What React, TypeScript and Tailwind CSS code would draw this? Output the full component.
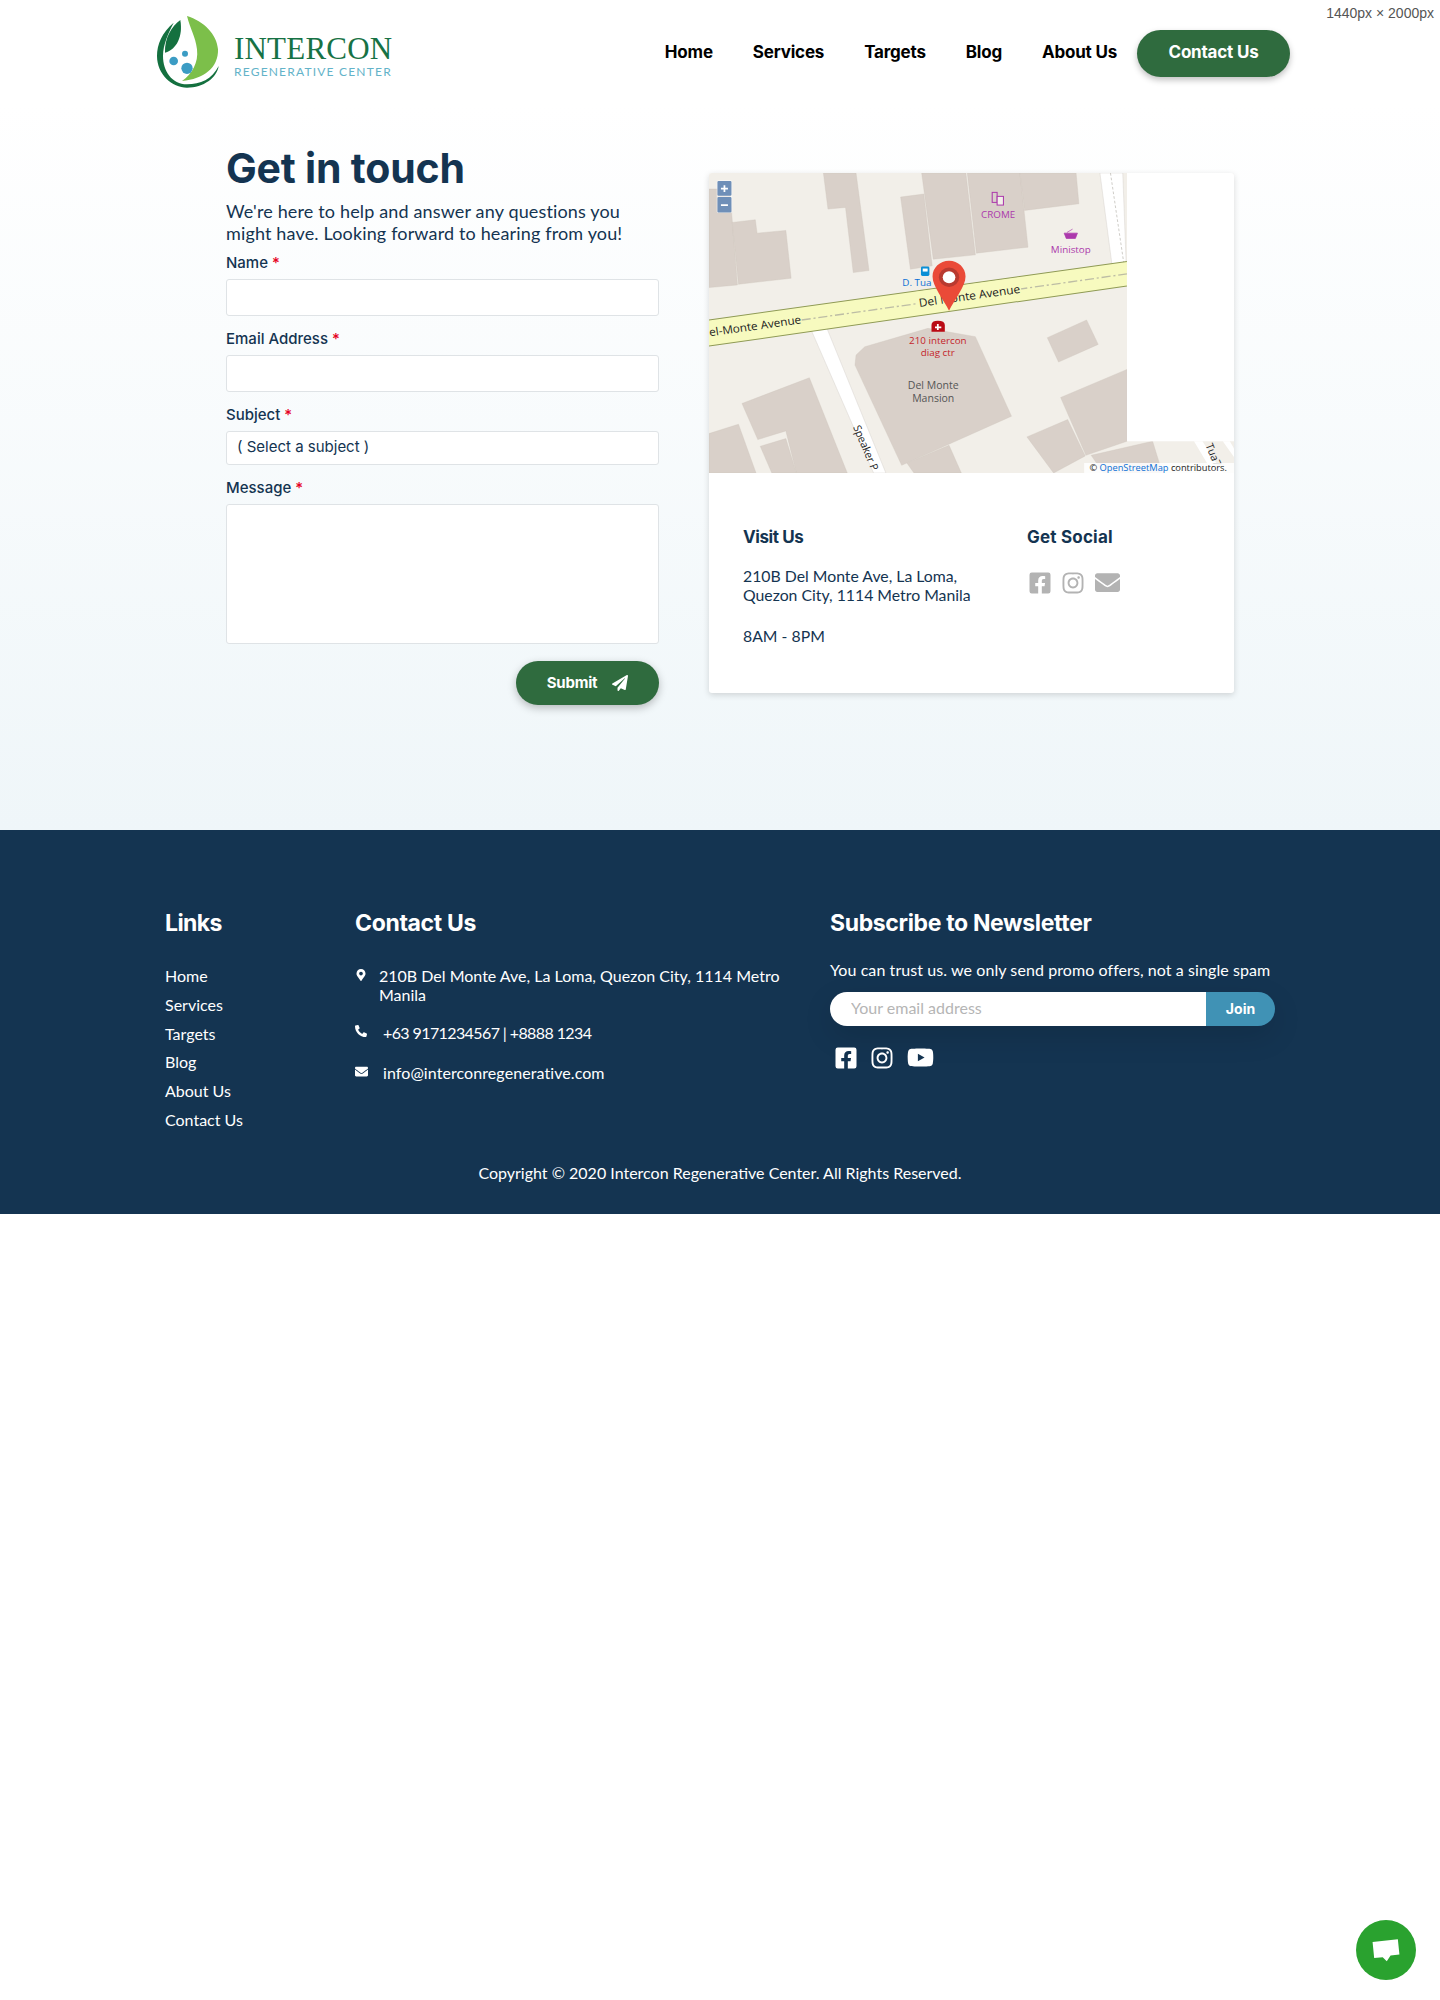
import { FaEnvelope, FaFacebookSquare, FaInstagram, FaMapMarkerAlt, FaPaperPlane, FaPhoneAlt, FaYoutube } from "react-icons/fa"

const navLinks = ["Home", "Services", "Targets", "Blog", "About Us"]
const footerLinks = ["Home", "Services", "Targets", "Blog", "About Us", "Contact Us"]

function Logo() {
  return (
    <div className="flex items-center w-[235px] h-[71px]">
      <svg viewBox="50 50 186 216" className="w-[62px] h-[72px] shrink-0">
        <path d="M100 70 C65 100 50 135 50 170 C50 225 95 265 140 265 C190 265 230 235 235 200 C215 240 180 255 140 255 C95 255 68 215 68 170 C68 135 85 100 100 70Z" fill="#14703f" />
        <path d="M120 62 C95 80 72 115 74 160 C110 150 128 110 120 62Z" fill="#14703f" />
        <path d="M140 50 C150 90 165 110 170 150 C175 190 155 225 125 245 C190 240 235 205 233 150 C230 105 190 65 140 50Z" fill="#7cbf4a" />
        <circle cx="134" cy="163" r="9" fill="#3b9cc4" />
        <circle cx="100" cy="185" r="13" fill="#3b9cc4" />
        <circle cx="140" cy="207" r="17" fill="#3b9cc4" />
      </svg>
      <div className="ml-[15px] pt-[8px]">
        <div className="font-['Liberation_Serif',serif] text-[31px] leading-[30px] text-[#177245] tracking-[0.2px]">INTERCON</div>
        <div className="font-['Lato',sans-serif] text-[12px] leading-[14px] text-[#63b3c9] tracking-[1.2px] whitespace-nowrap mt-[1px]">REGENERATIVE CENTER</div>
      </div>
    </div>
  )
}

function MapView() {
  const buildings = [
    "352,40 445,40 482,332 437,338 415,143 365,148",
    "26,88 85,88 107,375 26,383",
    "92,188 158,180 163,220 245,212 260,355 110,373",
    "572,112 638,103 662,318 600,328",
    "632,40 758,40 785,285 665,298",
    "762,40 912,40 935,262 788,280",
    "912,40 1072,40 1080,132 925,152",
    "445,585 470,560 650,505 785,530 888,768 575,915 442,615",
    "590,908 710,855 745,938 610,938",
    "990,533 1102,480 1135,553 1022,606",
    "1028,712 1217,628 1217,843 1100,885",
    "932,830 1048,778 1098,887 1008,938",
    "1115,885 1290,843 1318,938 1150,938",
    "120,730 312,653 420,938 275,938 245,812 165,838",
    "26,820 110,792 160,938 26,938",
    "172,858 245,835 275,938 205,938",
  ]
  return (
    <svg viewBox="26 40 1496 898" preserveAspectRatio="none" className="block w-full h-[300px]">
      <rect x="26" y="40" width="1496" height="898" fill="#f2efe9" />
      {buildings.map((b) => (
        <polygon key={b} points={b} fill="#d9d0c9" stroke="#cdc4bc" strokeWidth="1" />
      ))}
      <polygon points="1140,40 1205,40 1215,320 1175,320" fill="#fff" stroke="#c9c5bd" strokeWidth="1" />
      <line x1="1170" y1="40" x2="1208" y2="310" stroke="#b9b5ae" strokeWidth="2" strokeDasharray="8 6" />
      <polygon points="318,512 362,505 530,938 495,938" fill="#fff" stroke="#c9c5bd" />
      <polygon points="1408,843 1432,843 1490,938 1462,938" fill="#fff" />
      <polygon points="1490,843 1510,843 1522,865 1522,890" fill="#fff" />
      <polygon points="26,480 1217,305 1217,378 26,558" fill="#f7fabf" />
      <line x1="26" y1="480" x2="1217" y2="305" stroke="#8f9a55" strokeWidth="3" />
      <line x1="26" y1="558" x2="1217" y2="378" stroke="#8f9a55" strokeWidth="3" />
      <line x1="290" y1="480" x2="1217" y2="342" stroke="#bdbda5" strokeWidth="4" strokeDasharray="26 8 6 8" />
      <g fontFamily="'Open Sans',sans-serif">
        <rect x="620" y="396" width="300" height="50" fill="#f7fabf" transform="rotate(-8.4 620 441)" />
        <text x="28" y="529" fontSize="33.5" fill="#222" transform="rotate(-8.4 28 529)">el-Monte Avenue</text>
        <text x="626" y="441" fontSize="34" fill="#222" transform="rotate(-8.4 626 441)">Del Monte Avenue</text>
        <text x="850" y="175" fontSize="28" fill="#ac39ac" textAnchor="middle">CROME</text>
        <text x="1057" y="279" fontSize="28" fill="#ac39ac" textAnchor="middle">Ministop</text>
        <text x="577" y="379" fontSize="28" fill="#0a6fd6">D. Tua</text>
        <text x="678" y="553" fontSize="28" fill="#c4252b" textAnchor="middle">210 intercon</text>
        <text x="678" y="588" fontSize="28" fill="#c4252b" textAnchor="middle">diag ctr</text>
        <text x="665" y="687" fontSize="30" fill="#555" textAnchor="middle">Del Monte</text>
        <text x="665" y="725" fontSize="30" fill="#555" textAnchor="middle">Mansion</text>
        <text x="436" y="800" fontSize="31" fill="#222" transform="rotate(68 436 800)">Speaker P</text>
        <text x="1440" y="855" fontSize="31" fill="#222" transform="rotate(68 1440 855)">Tua7</text>
      </g>
      <rect x="833" y="98" width="14" height="30" fill="none" stroke="#ac39ac" strokeWidth="3" />
      <rect x="847" y="110" width="18" height="26" fill="#f2efe9" stroke="#ac39ac" strokeWidth="3" />
      <path d="M1038 220 H1076 L1070 236 H1044Z M1046 218 L1062 208" fill="#ac39ac" stroke="#ac39ac" strokeWidth="2" />
      <rect x="630" y="320" width="24" height="28" rx="4" fill="#0a8fd6" />
      <rect x="635" y="326" width="14" height="9" fill="#fff" />
      <path d="M660 515 V495 Q660 482 678 482 Q698 482 698 495 V515Z" fill="#ba0a14" />
      <path d="M678 492 V510 M670 502 H688" stroke="#fff" strokeWidth="5" />
      <path d="M710 303 C736 303 757 324 757 350 C757 380 725 420 710 452 C695 420 663 380 663 350 C663 324 684 303 710 303Z" fill="#ea4a38" />
      <circle cx="710" cy="352" r="29" fill="#b93a30" />
      <circle cx="710" cy="352" r="18" fill="#fff" />
      <rect x="48" y="62" width="44" height="98" rx="5" fill="#fff" fillOpacity="0.6" />
      <rect x="50" y="64" width="40" height="44" rx="3" fill="#6f8fb8" />
      <rect x="50" y="112" width="40" height="46" rx="3" fill="#6f8fb8" />
      <path d="M60 87 H80 M70 77 V97 M60 136 H80" stroke="#fff" strokeWidth="5" />
      <rect x="1217" y="40" width="305" height="803" fill="#fff" />
      <rect x="1095" y="908" width="427" height="30" fill="#fff" fillOpacity="0.85" />
      <text x="1110" y="933" fontSize="26.5" fontFamily="'Open Sans',sans-serif" fill="#222">
        © <tspan fill="#0a6fd6">OpenStreetMap</tspan> contributors.
      </text>
    </svg>
  )
}

function Field({ label, className, children }: { label: string; className?: string; children: React.ReactNode }) {
  return (
    <div className={className}>
      <label className="block font-['Inter',sans-serif] text-[15px] leading-[20px] font-medium text-[#143451]">
        {label} <span className="text-[#e60023]">*</span>
      </label>
      {children}
    </div>
  )
}

const inputClass = "block w-full bg-white border border-[#dfe3e6] rounded-[3px] outline-none"

export default function App() {
  return (
    <div className="relative font-['Lato',sans-serif] bg-white min-h-[2000px]">
      <div className="absolute top-[5px] right-[6px] font-['Liberation_Sans',sans-serif] text-[14px] leading-[17px] text-[#555]">1440px × 2000px</div>

      <header className="w-[1140px] h-[104px] mx-auto flex items-center justify-between pl-[7px]">
        <Logo />
        <nav className="flex items-center mt-[2px] font-['Inter',sans-serif] text-[17px] font-bold text-black tracking-[-0.2px]">
          {navLinks.map((n) => (
            <a key={n} className="ml-[40px] first:ml-0">{n}</a>
          ))}
          <a className="ml-[20px] w-[153px] h-[47px] flex items-center justify-center rounded-full bg-[#2f6b3e] text-white shadow-[0_3px_6px_rgba(0,0,0,0.25)]">Contact Us</a>
        </nav>
      </header>

      <section className="h-[726px] bg-gradient-to-b from-white to-[#eff6f9]">
        <div className="w-[1140px] mx-auto pl-[76px] pt-[39px] flex items-start gap-[50px] text-[#143451]">
          <form className="w-[433px] shrink-0">
            <h1 className="font-['Inter',sans-serif] text-[41px] leading-[50px] font-bold tracking-[-0.2px]">Get in touch</h1>
            <p className="text-[18px] leading-[22px] mt-[7px] tracking-[0.15px]">We're here to help and answer any questions you might have. Looking forward to hearing from you!</p>
            <Field label="Name" className="mt-[9px]">
              <input className={`${inputClass} h-[37px] mt-[6px]`} />
            </Field>
            <Field label="Email Address" className="mt-[13px]">
              <input className={`${inputClass} h-[37px] mt-[6px]`} />
            </Field>
            <Field label="Subject" className="mt-[13px]">
              <select className={`${inputClass} h-[34px] mt-[6px] px-[10px] pb-[2px] font-['Inter',sans-serif] text-[15px] appearance-none`}>
                <option>( Select a subject )</option>
              </select>
            </Field>
            <Field label="Message" className="mt-[13px]">
              <textarea className={`${inputClass} h-[140px] mt-[6px] resize-none`} />
            </Field>
            <div className="flex justify-end mt-[17px]">
              <button type="button" className="w-[143px] h-[44px] flex items-center justify-center gap-[15px] rounded-full bg-[#2f6b3e] text-white font-['Inter',sans-serif] font-bold text-[15px] tracking-[-0.2px] shadow-[0_3px_8px_rgba(0,0,0,0.25)]">
                Submit
                <FaPaperPlane className="text-[16px]" />
              </button>
            </div>
          </form>

          <div className="w-[525px] shrink-0 mt-[30px] bg-white rounded-[3px] shadow-[0_2px_6px_rgba(0,0,0,0.15)] overflow-hidden">
            <MapView />
            <div className="h-[220px] flex pl-[34px] pt-[54px]">
              <div className="w-[284px]">
                <h3 className="font-['Inter',sans-serif] font-bold text-[17px] leading-[20px] tracking-[-0.4px]">Visit Us</h3>
                <p className="text-[15.8px] leading-[19px] mt-[19px]">210B Del Monte Ave, La Loma,<br />Quezon City, 1114 Metro Manila</p>
                <p className="text-[15.8px] leading-[19px] mt-[22px]">8AM - 8PM</p>
              </div>
              <div>
                <h3 className="font-['Inter',sans-serif] font-bold text-[17px] leading-[20px] tracking-[0.2px]">Get Social</h3>
                <div className="flex items-center gap-[9px] mt-[23px] ml-[1px] text-[#b3b3b3] text-[24px]">
                  <FaFacebookSquare />
                  <FaInstagram />
                  <FaEnvelope className="text-[25px] ml-[1px]" />
                </div>
              </div>
            </div>
          </div>
        </div>
      </section>

      <footer className="h-[384px] bg-[#143451] text-white">
        <div className="w-[1140px] mx-auto px-[15px] pt-[78px] flex">
          <div className="w-[190px]">
            <h4 className="font-['Inter',sans-serif] font-bold text-[23px] leading-[30px] tracking-[-0.6px]">Links</h4>
            <ul className="mt-[24px] text-[16px] leading-[28.8px]">
              {footerLinks.map((l) => (
                <li key={l}>{l}</li>
              ))}
            </ul>
          </div>
          <div className="w-[475px]">
            <h4 className="font-['Inter',sans-serif] font-bold text-[23px] leading-[30px] tracking-[-0.35px]">Contact Us</h4>
            <div className="mt-[28px] w-[445px] text-[16px] leading-[19px]">
              <div className="flex">
                <FaMapMarkerAlt className="text-[12px] mt-[3px] w-[12px] shrink-0" />
                <span className="ml-[12px]">210B Del Monte Ave, La Loma, Quezon City, 1114 Metro Manila</span>
              </div>
              <div className="flex mt-[19px]">
                <FaPhoneAlt className="text-[12px] mt-[2px] shrink-0" />
                <span className="ml-[16px] tracking-[-0.6px]">+63 9171234567 | +8888 1234</span>
              </div>
              <div className="flex mt-[21px]">
                <FaEnvelope className="text-[13px] mt-[2px] shrink-0" />
                <span className="ml-[15px] tracking-[0.08px]">info@interconregenerative.com</span>
              </div>
            </div>
          </div>
          <div className="w-[445px]">
            <h4 className="font-['Inter',sans-serif] font-bold text-[23px] leading-[30px] tracking-[-0.35px]">Subscribe to Newsletter</h4>
            <p className="mt-[22px] text-[16px] leading-[19px] whitespace-nowrap tracking-[0.08px]">You can trust us. we only send promo offers, not a single spam</p>
            <div className="flex h-[34px] mt-[13px] rounded-full shadow-[0_10px_30px_rgba(0,0,0,0.12)]">
              <input placeholder="Your email address" className="flex-1 min-w-0 bg-white rounded-l-full pl-[21px] pb-[2px] text-[16px] text-[#143451] placeholder:text-[#b5b5b5] outline-none" />
              <button type="button" className="w-[69px] bg-[#4092b5] rounded-r-full pb-[2px] font-['Inter',sans-serif] font-bold text-[14px]">Join</button>
            </div>
            <div className="flex items-center mt-[18px] ml-[4px] text-[24px]">
              <FaFacebookSquare />
              <FaInstagram className="ml-[12px]" />
              <FaYoutube className="ml-[13px] text-[27px]" />
            </div>
          </div>
        </div>
        <p className="text-center text-[16px] leading-[19px] mt-[28px]">Copyright © 2020 Intercon Regenerative Center. All Rights Reserved.</p>
      </footer>

      <button type="button" className="absolute left-[1356px] top-[1920px] w-[60px] h-[60px] rounded-full bg-[#2aa22f] flex items-center justify-center">
        <svg viewBox="120 145 95 78" className="w-[30px] h-[25px]">
          <polygon points="125,157 205,148 210,197 182,200 170,218 157,205 130,208" fill="#fff" />
        </svg>
      </button>
    </div>
  )
}
